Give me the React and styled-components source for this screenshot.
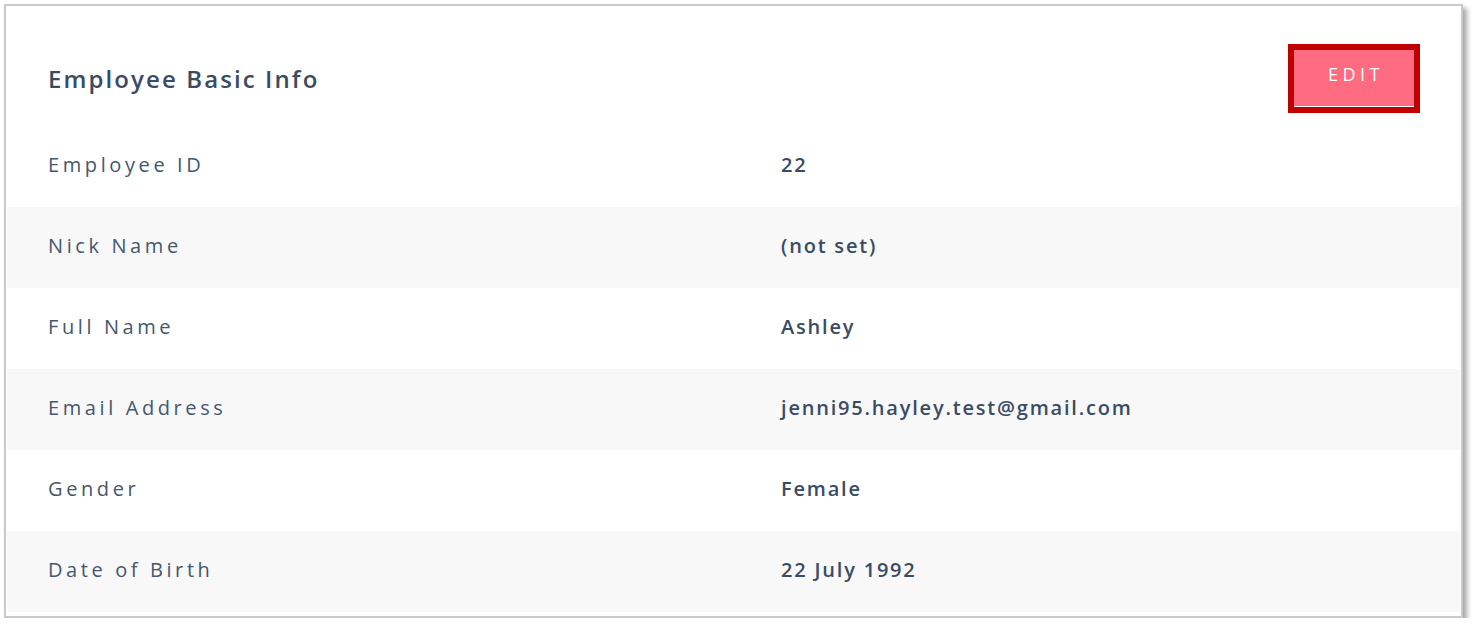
import React from "react";
import styled, { createGlobalStyle } from "styled-components";

const Global = createGlobalStyle`
  html, body { margin: 0; padding: 0; background: #ffffff; }
  body { font-family: "Open Sans", "Liberation Sans", sans-serif; }
`;

const Page = styled.div`
  padding: 4px 0 0 4px;
`;

const Card = styled.section`
  width: 1459px;
  box-sizing: border-box;
  border: 2px solid #c9c9c9;
  background: #ffffff;
  box-shadow: 4px 4px 5px rgba(0, 0, 0, 0.35);
  padding: 0 1px 4px 1px;
`;

const Header = styled.header`
  display: flex;
  align-items: center;
  justify-content: space-between;
  padding: 38px 40px 13px 41px;
`;

const Title = styled.h2`
  margin: 0;
  font-size: 24px;
  font-weight: 600;
  color: #3a4c63;
  letter-spacing: 2.1px;
  line-height: 1;
`;

const EditButton = styled.button`
  box-sizing: border-box;
  width: 132px;
  height: 69px;
  border: 6px solid #c00000;
  background: #ff6b81;
  box-shadow: inset 0 -1px 0 #ffffff;
  color: #ffffff;
  font-family: "Open Sans", "Liberation Sans", sans-serif;
  font-size: 18px;
  font-weight: 400;
  letter-spacing: 4.5px;
  padding: 0 0 9px 4px;
  cursor: pointer;
`;

const Row = styled.div`
  display: grid;
  grid-template-columns: 733px 1fr;
  align-items: center;
  height: 81px;
  padding-left: 41px;
  background: ${(p) => (p.$striped ? "#f8f8f8" : "#ffffff")};
`;

const Label = styled.div`
  font-size: 20px;
  font-weight: 500;
  color: #45576d;
  letter-spacing: 3.6px;
  line-height: 1;
  padding-bottom: 3px;
`;

const Value = styled.div`
  font-size: 20px;
  font-weight: 600;
  color: #3a4c63;
  letter-spacing: 1.8px;
  line-height: 1;
  padding-bottom: 3px;
`;

const rows = [
  ["Employee ID", "22"],
  ["Nick Name", "(not set)"],
  ["Full Name", "Ashley"],
  ["Email Address", "jenni95.hayley.test@gmail.com"],
  ["Gender", "Female"],
  ["Date of Birth", "22 July 1992"],
];

export default function App() {
  return (
    <Page>
      <Global />
      <Card>
        <Header>
          <Title>Employee Basic Info</Title>
          <EditButton>EDIT</EditButton>
        </Header>
        {rows.map(([label, value], i) => (
          <Row key={label} $striped={i % 2 === 1}>
            <Label>{label}</Label>
            <Value>{value}</Value>
          </Row>
        ))}
      </Card>
    </Page>
  );
}
